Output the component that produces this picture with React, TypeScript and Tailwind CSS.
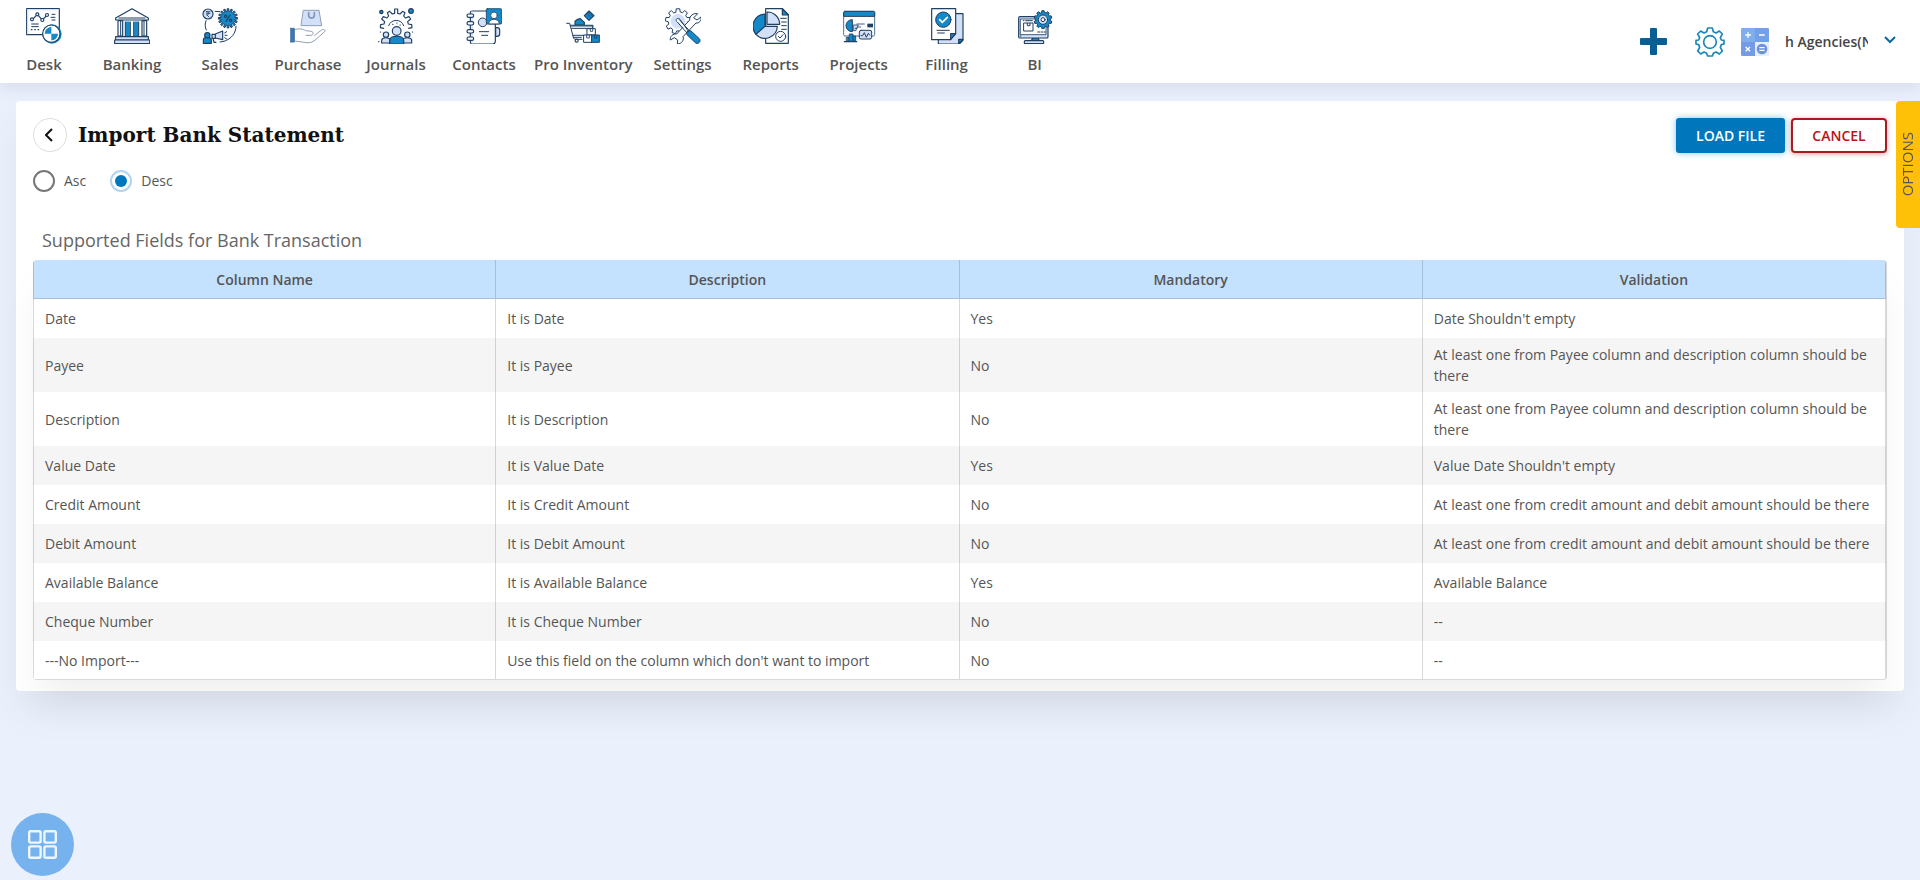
import React from "react";

const NAVY = "#1f3f63";
const BLUE = "#1489c9";
const PALE = "#d4e0f8";

function NavIcon({ children }: { children: React.ReactNode }) {
  return (
    <svg
      aria-hidden="true"
      viewBox="0 0 108 108"
      className="h-9 w-9 shrink-0"
      fill="none"
      stroke={NAVY}
      strokeWidth="3.5"
      strokeLinecap="round"
      strokeLinejoin="round"
    >
      {children}
    </svg>
  );
}

function gearPath(cx: number, cy: number, outer: number, inner: number, teeth: number) {
  const points: string[] = [];
  const step = (Math.PI * 2) / teeth;
  for (let i = 0; i < teeth; i++) {
    const a = i * step - Math.PI / 2;
    const corners: [number, number][] = [
      [-0.32, inner],
      [-0.2, outer],
      [0.2, outer],
      [0.32, inner],
    ];
    corners.forEach(([t, r]) => {
      points.push(`${(cx + Math.cos(a + t * step) * r).toFixed(1)} ${(cy + Math.sin(a + t * step) * r).toFixed(1)}`);
    });
  }
  return `M${points.join("L")}Z`;
}

const DeskIcon = () => (
  <NavIcon>
    <rect x="2" y="2" width="98" height="78" fill="#fff" />
    <path d="M5 77V5h92" stroke={PALE} />
    <path d="M22 32l9-10M37 22l10 12M53 32l8-8" />
    <g fill="#fff">
      <circle cx="18" cy="34" r="4.5" />
      <circle cx="34" cy="19" r="4.5" />
      <circle cx="49" cy="36" r="4.5" />
      <circle cx="63" cy="21" r="4.5" />
    </g>
    <path d="M78 19h9M75 28h12M78 36h9M17 48h20M17 56h20" strokeWidth="3" />
    <path d="M16 65h2M26 65h2M36 65h2" />
    <circle cx="78" cy="78" r="29" fill={BLUE} stroke="none" />
    <circle cx="76" cy="77" r="26" fill="#fff" />
    <path d="M76 77V57a20 20 0 0 0-20 20ZM76 77v20a20 20 0 0 0 20-20Z" fill={BLUE} stroke="none" />
  </NavIcon>
);

const BankingIcon = () => (
  <NavIcon>
    <path d="M54 2L5 30v6h98v-6Z" fill="#fff" />
    <path d="M15 30h78" />
    <path d="M12 38h14v46H12ZM84 38h14v46H84Z" fill="#fff" />
    <path d="M36 42h10v42H36ZM62 42h10v42H62Z" fill={BLUE} stroke={BLUE} />
    <path d="M34 42v42M74 42v42M20 38v46M90 38v46" strokeWidth="3" />
    <path d="M49 42v42M59 42v42" strokeWidth="3" />
    <rect x="5" y="86" width="98" height="10" fill={PALE} />
    <rect x="2" y="96" width="105" height="11" fill={PALE} />
  </NavIcon>
);

const SalesIcon = () => (
  <NavIcon>
    <circle cx="18" cy="18" r="15" fill={PALE} />
    <path d="M13 11h11M13 16h11M14 21c9 0 9-10 0-10M15 21l6 6" strokeWidth="2.5" />
    <path d="M39 10l14 1M12 38c-4 10-3 20 1 28M102 55c0 20-14 38-36 45l-12 2" strokeWidth="3" />
    <path d={gearPath(78, 31, 29, 21, 16)} fill={BLUE} strokeWidth="3" />
    <path d="M72 40l12-18" strokeWidth="3.5" />
    <circle cx="71" cy="25" r="3.5" />
    <circle cx="86" cy="37" r="3.5" />
    <circle cx="16" cy="82" r="8" fill={BLUE} />
    <path d="M4 106V96c0-5 4-7 9-7h6c5 0 9 2 9 7v10Z" fill={BLUE} />
    <path d="M30 79h10v12H30ZM40 78l22-9v26l-22-5ZM33 91l3 12h6" fill={PALE} />
    <path d="M68 75l6-4M69 82h6M68 89l6 4" strokeWidth="3" />
  </NavIcon>
);

const PurchaseIcon = () => (
  <NavIcon>
    <g stroke="#7b8da4" strokeWidth="2.5">
      <path d="M41 7h46l8 46H34Z" fill={PALE} />
      <path d="M56 14v8c0 11 17 11 17 0v-8" stroke="#7f96b9" strokeWidth="5" />
      <rect x="1" y="61" width="12" height="41" fill="#3f79b5" stroke="#356294" />
      <path
        d="M14 65c14-5 24-2 33 3l17 2c8 2 7 11-1 12H48M14 99l36 5c10 1 20-2 28-10l28-25c-2-7-9-5-14-1L74 82"
        fill="#fff"
      />
    </g>
  </NavIcon>
);

const JournalsIcon = () => (
  <NavIcon>
    <circle cx="10" cy="12" r="5" fill={BLUE} />
    <circle cx="99" cy="9" r="7" fill={BLUE} />
    <path
      d="M17 61l-10-2 1-9 10-2 2-7-9-8 5-7 11 4 5-6-4-10 7-4 8 8 7-2V3h9v13l7 2 8-8 7 4-4 10 5 6 11-4 5 7-9 8 2 7 10 2 1 9-10 2"
      fill="#fff"
      strokeWidth="3.5"
    />
    <path d="M32 53a24 24 0 0 1 45 0" fill="#fff" strokeWidth="3" />
    <path d="M7 72h1M103 72h1M44 49h1M56 45h1M66 51h1M2 101h1" />
    <circle cx="24" cy="80" r="8" fill={PALE} />
    <circle cx="88" cy="80" r="8" fill={PALE} />
    <path d="M11 105V96c2-9 23-9 26 0v9ZM74 105v-9c2-9 25-9 27 0v9Z" fill={PALE} />
    <circle cx="56" cy="69" r="13" fill={PALE} />
    <path d="M35 108V96c2-15 40-15 42 0v12Z" fill={BLUE} />
  </NavIcon>
);

const ContactsIcon = () => (
  <NavIcon>
    <path d="M18 108h62c5 0 8-3 8-8V9H18c-3 0-5 2-5 5v86c0 5 2 8 5 8Z" fill="#fff" />
    <path d="M18 12v92" stroke={PALE} strokeWidth="5" />
    <g fill="#fff">
      <rect x="3" y="18" width="20" height="10" rx="5" />
      <rect x="3" y="41" width="20" height="10" rx="5" />
      <rect x="3" y="65" width="20" height="10" rx="5" />
      <rect x="3" y="87" width="20" height="10" rx="5" />
    </g>
    <path d="M89 59h5c5 0 7 4 7 8v10c0 5-3 8-8 8h-4Z" fill={PALE} />
    <circle cx="50" cy="43" r="13" fill={PALE} strokeWidth="3" />
    <path d="M40 71h28M47 82h18" strokeWidth="3" />
    <rect x="61" y="2" width="46" height="46" rx="3" fill={BLUE} strokeWidth="2.5" />
    <circle cx="84" cy="22" r="10" fill="#fff" strokeWidth="2.5" />
    <path d="M68 47c0-18 32-18 32 0Z" fill="#fff" strokeWidth="2.5" />
  </NavIcon>
);

const InventoryIcon = () => (
  <NavIcon>
    <path d="M72 9l15 14-15 14-14-14Z" fill={BLUE} />
    <path d="M68 19l8 8M72 14l9 9" strokeWidth="2.5" />
    <path d="M30 51V40l8-6 8-2 12 11v8Z" fill={BLUE} />
    <path d="M5 46h9l11 42c1 5 4 6 8 6h18" strokeWidth="3" />
    <path d="M17 53h66v12" fill="none" strokeWidth="5" stroke="#315775" />
    <path d="M20 61h58M24 82h32M25 88h24" strokeWidth="3" />
    <circle cx="35" cy="98" r="4.5" fill="#fff" />
    <rect x="67" y="62" width="24" height="19" fill="#fff" strokeWidth="3" />
    <rect x="57" y="81" width="24" height="22" fill="#fff" strokeWidth="3" />
    <rect x="81" y="81" width="22" height="22" fill={BLUE} strokeWidth="3" />
    <path d="M76 63v7h7v-7M65 82v8h8v-8M88 82v8h8v-8" strokeWidth="2.5" />
  </NavIcon>
);

const SettingsIcon = () => (
  <NavIcon>
    <path d={gearPath(39, 40, 38, 29, 9)} fill="#fff" strokeWidth="3" />
    <circle cx="39" cy="40" r="22" fill={PALE} stroke="none" />
    <path
      d="M97 17c-12-3-24 7-23 19L35 78c-11-2-21 8-19 18l12-7 10 7-1 12c13 0 21-12 17-22l39-41c9 2 17-8 15-18l-12 9-9-6Z"
      fill="#fff"
      strokeWidth="3"
    />
    <path d="M34 39c-3-8 6-10 11-5l26 37" fill="#fff" strokeWidth="3" />
    <path d="M37 42L66 75M43 35l30 33" strokeWidth="3" />
    <path d="M67 71l10-3 26 24c7 9-5 19-12 12L66 80Z" fill={BLUE} strokeWidth="3" />
  </NavIcon>
);

const ReportsIcon = () => (
  <NavIcon>
    <path d="M38 2h50l18 18v86H38Z" fill="#fff" />
    <path d="M88 2v19h18Z" fill={BLUE} />
    <path d="M83 31h17M86 42h14M86 53h14M86 64h14" strokeWidth="3" />
    <path d="M36 55V18A37 37 0 0 0 9 79Z" fill={BLUE} />
    <path d="M36 55L9 79A37 37 0 0 0 73 55Z" fill={PALE} />
    <path d="M42 49V12a37 37 0 0 1 38 37Z" fill={PALE} />
    <circle cx="83" cy="85" r="15" fill="#fff" strokeWidth="3" />
    <path d="M76 85l5 5 9-10" strokeWidth="3" />
  </NavIcon>
);

const ProjectsIcon = () => (
  <NavIcon>
    <rect x="8" y="10" width="93" height="74" rx="4" fill="#fff" strokeWidth="3" stroke="#4d7590" />
    <path d="M8 24V14c0-3 2-4 4-4h85c3 0 4 2 4 4v10Z" fill={BLUE} strokeWidth="3" />
    <path d="M33 35a18 18 0 1 0 0 36Z" fill={BLUE} strokeWidth="3" />
    <path d="M38 51h14l-8 17h-6Z" fill={PALE} strokeWidth="2.5" />
    <path d="M48 48h22M50 57h9M42 61h6" strokeWidth="2.5" />
    <rect x="79" y="47" width="17" height="11" fill={NAVY} stroke="none" />
    <rect x="55" y="67" width="37" height="26" rx="5" fill={PALE} strokeWidth="3" />
    <path d="M60 83h5l5-9 6 14 6-12 4 5" strokeWidth="3" />
    <path d="M17 88h7v12h-7ZM26 78h10v22H26ZM38 84h6v16h-6Z" fill={BLUE} strokeWidth="2.5" />
    <path d="M10 101h37" strokeWidth="4" />
  </NavIcon>
);

const FillingIcon = () => (
  <NavIcon>
    <path d="M82 17h20v80l-11 11H28V94" fill={PALE} />
    <path d="M102 94H89v14Z" fill={BLUE} />
    <path d="M8 2h72v75L64 95H8Z" fill="#fff" />
    <path d="M80 77H65v18Z" fill={BLUE} />
    <circle cx="43" cy="35" r="23" fill={BLUE} strokeWidth="3" />
    <path d="M32 35l8 8 15-15" stroke="#fff" strokeWidth="5" />
    <path d="M24 67h37M26 75h20" strokeWidth="3" />
  </NavIcon>
);

const BiIcon = () => (
  <NavIcon>
    <path d="M48 89h16l3 12H41Z" fill={BLUE} />
    <rect x="22" y="98" width="58" height="9" rx="3" fill={PALE} />
    <rect x="5" y="26" width="88" height="64" rx="4" fill={PALE} />
    <rect x="11" y="33" width="76" height="47" fill="#fff" strokeWidth="2.5" />
    <rect x="21" y="45" width="27" height="24" fill="#fff" strokeWidth="3" />
    <path d="M31 46v7h8v-7M19 38h2M26 38h20M62 72h6M72 72h6M82 72h3M10 84h2" strokeWidth="3" />
    <path d={gearPath(78, 35, 27, 22, 10)} fill={BLUE} strokeWidth="3" />
    <circle cx="78" cy="35" r="14" fill={PALE} strokeWidth="3" />
    <circle cx="78" cy="35" r="6" fill="#fff" strokeWidth="3" />
  </NavIcon>
);

const NAV = [
  { label: "Desk", Icon: DeskIcon },
  { label: "Banking", Icon: BankingIcon },
  { label: "Sales", Icon: SalesIcon },
  { label: "Purchase", Icon: PurchaseIcon },
  { label: "Journals", Icon: JournalsIcon },
  { label: "Contacts", Icon: ContactsIcon },
  { label: "Pro Inventory", Icon: InventoryIcon },
  { label: "Settings", Icon: SettingsIcon },
  { label: "Reports", Icon: ReportsIcon },
  { label: "Projects", Icon: ProjectsIcon },
  { label: "Filling", Icon: FillingIcon },
  { label: "BI", Icon: BiIcon },
];

const COLUMNS = ["Column Name", "Description", "Mandatory", "Validation"];

const ROWS = [
  ["Date", "It is Date", "Yes", "Date Shouldn't empty"],
  ["Payee", "It is Payee", "No", "At least one from Payee column and description column should be there"],
  ["Description", "It is Description", "No", "At least one from Payee column and description column should be there"],
  ["Value Date", "It is Value Date", "Yes", "Value Date Shouldn't empty"],
  ["Credit Amount", "It is Credit Amount", "No", "At least one from credit amount and debit amount should be there"],
  ["Debit Amount", "It is Debit Amount", "No", "At least one from credit amount and debit amount should be there"],
  ["Available Balance", "It is Available Balance", "Yes", "Available Balance"],
  ["Cheque Number", "It is Cheque Number", "No", "--"],
  ["---No Import---", "Use this field on the column which don't want to import", "No", "--"],
];

function Header() {
  return (
    <header className="relative z-10 flex h-[83px] items-stretch justify-between bg-white shadow-[0_4px_16px_rgba(60,60,110,0.12)]">
      <nav aria-label="Main" className="flex">
        {NAV.map(({ label, Icon }) => (
          <a
            key={label}
            href="#"
            className="flex min-w-[88px] flex-col items-center px-[6px] pt-2 text-[15px] leading-5 font-semibold whitespace-nowrap text-[#555]"
          >
            <Icon />
            <span className="mt-[10px]">{label}</span>
          </a>
        ))}
      </nav>
      <div className="flex items-center pr-6">
        <button type="button" aria-label="Add" className="mr-7">
          <svg viewBox="0 0 27 27" className="h-[27px] w-[27px]" fill="#075f94" aria-hidden="true">
            <path d="M11 0h5a1 1 0 0 1 1 1v9h9a1 1 0 0 1 1 1v5a1 1 0 0 1-1 1h-9v9a1 1 0 0 1-1 1h-5a1 1 0 0 1-1-1v-9H1a1 1 0 0 1-1-1v-5a1 1 0 0 1 1-1h9V1a1 1 0 0 1 1-1Z" />
          </svg>
        </button>
        <button type="button" aria-label="Preferences" className="mr-4">
          <svg
            viewBox="0 0 90 90"
            className="h-[30px] w-[30px]"
            fill="none"
            stroke="#1b86b8"
            strokeWidth="5"
            strokeLinejoin="round"
            aria-hidden="true"
          >
            <path d="M38 3h14l3 11 8 4 10-6 9 9-6 11 3 7 8 1v11l-8 2-3 8 6 11-9 9-10-6-8 4-3 8H38l-3-8-8-4-10 6-9-9 6-11-3-8-8-2V40l8-1 3-7-6-11 9-9 10 6 8-4Z" />
            <circle cx="45" cy="45" r="19" />
          </svg>
        </button>
        <button type="button" aria-label="Calculator" className="mr-4">
          <svg viewBox="0 0 84 84" className="h-7 w-7" fill="none" stroke="#fff" strokeWidth="4" aria-hidden="true">
            <path d="M4 0h38v42H0V4a4 4 0 0 1 4-4Z" fill="#80adeb" stroke="none" />
            <path d="M42 0h38a4 4 0 0 1 4 4v38H42Z" fill="#759fe6" stroke="none" />
            <path d="M0 42h42v42H4a4 4 0 0 1-4-4Z" fill="#759be6" stroke="none" />
            <path d="M42 42h42v38a4 4 0 0 1-4 4H42Z" fill="#e6eefb" stroke="none" />
            <circle cx="63" cy="63" r="16" fill="#6b91e0" stroke="none" />
            <path d="M21 13v17M13 21h17M54 21h17M14 57l13 13M27 57l-13 13M55 59h16M55 67h16" />
          </svg>
        </button>
        <button type="button" className="flex items-center text-sm font-semibold text-[#444]">
          <span className="w-[83px] overflow-hidden text-left whitespace-nowrap">h Agencies(N</span>
          <svg
            viewBox="0 0 12 8"
            className="mb-[3px] ml-4 h-2 w-3"
            fill="none"
            stroke="#0b6a9e"
            strokeWidth="2"
            aria-hidden="true"
          >
            <path d="M1 1l5 5 5-5" />
          </svg>
        </button>
      </div>
    </header>
  );
}

function SortOption({ label, defaultChecked }: { label: string; defaultChecked?: boolean }) {
  return (
    <label className="flex items-center gap-[9px]">
      <input
        type="radio"
        name="sort"
        defaultChecked={defaultChecked}
        className="flex h-[22px] w-[22px] appearance-none items-center justify-center rounded-full border-2 border-[#777] bg-white before:h-3 before:w-3 before:rounded-full checked:border-[#b3d3ee] checked:before:bg-[#0077bc]"
      />
      {label}
    </label>
  );
}

export default function App() {
  return (
    <div className="min-h-screen bg-[#eaf0fc] font-['Open_Sans',sans-serif] text-sm text-[#555]">
      <Header />

      <main className="mx-4 mt-[18px] rounded-[4px] bg-white px-[17px] pt-[17px] pb-[11px] shadow-[0_20px_40px_rgba(0,0,0,0.05)]">
        <div className="flex items-start justify-between">
          <div className="flex items-center gap-[11px]">
            <button
              type="button"
              aria-label="Back"
              className="flex h-[34px] w-[34px] items-center justify-center rounded-full border border-[#ddd] bg-white"
            >
              <svg
                viewBox="0 0 8 14"
                className="mr-[3px] h-[14px] w-2"
                fill="none"
                stroke="#111"
                strokeWidth="2"
                aria-hidden="true"
              >
                <path d="M7 1L1 7l6 6" />
              </svg>
            </button>
            <h1 className="font-['DejaVu_Serif',serif] text-[20px] leading-7 font-bold text-[#111]">
              Import Bank Statement
            </h1>
          </div>
          <div className="flex items-center gap-[6px]">
            <button
              type="button"
              className="h-[35px] w-[109px] rounded-[3px] bg-[#0077bc] text-[14px] font-semibold text-white shadow-[0_0_6px_rgba(80,190,240,0.8)]"
            >
              LOAD FILE
            </button>
            <button
              type="button"
              className="h-[35px] w-24 rounded-[4px] border-2 border-[#a81c20] bg-white text-[14px] font-semibold text-[#b81418] shadow-[0_1px_5px_rgba(200,60,60,0.5)]"
            >
              CANCEL
            </button>
          </div>
        </div>

        <div role="radiogroup" aria-label="Sort order" className="mt-[17px] flex gap-6">
          <SortOption label="Asc" />
          <SortOption label="Desc" defaultChecked />
        </div>

        <h2 className="mt-9 ml-[9px] text-[18px] leading-6 text-[#666]">Supported Fields for Bank Transaction</h2>

        <div className="mt-2 overflow-hidden rounded-[4px] border-r border-[#d5d5d5] bg-white shadow-[0_24px_40px_-8px_rgba(0,0,0,0.07)]">
          <table className="w-full table-fixed border-separate border-spacing-0 text-left leading-[21px]">
            <thead>
              <tr className="h-[39px] bg-[#c4e1fe]">
                {COLUMNS.map((column) => (
                  <th
                    key={column}
                    scope="col"
                    className="border-r border-b border-black/15 px-3 text-center font-semibold first:border-l"
                  >
                    {column}
                  </th>
                ))}
              </tr>
            </thead>
            <tbody className="[&>tr:last-child>td]:border-b">
              {ROWS.map((row) => (
                <tr key={row[0]} className="h-[39px] even:bg-[#f5f5f5]">
                  {row.map((cell, i) => (
                    <td key={i} className="border-r border-black/15 px-[11px] py-[6px] first:border-l">
                      {cell}
                    </td>
                  ))}
                </tr>
              ))}
            </tbody>
          </table>
        </div>
      </main>

      <button
        type="button"
        className="fixed top-[101px] right-0 z-20 flex h-[127px] w-6 items-center justify-center rounded-l-[4px] bg-[#ffc107] text-[15px] text-[#555]"
      >
        <span className="rotate-180 [writing-mode:vertical-rl]">OPTIONS</span>
      </button>

      <button
        type="button"
        aria-label="Open apps"
        className="fixed bottom-1 left-[11px] z-20 flex h-[63px] w-[63px] items-center justify-center rounded-full bg-[#75b2ee]"
      >
        <svg viewBox="0 0 29 29" className="h-[29px] w-[29px]" fill="none" stroke="#eef6ff" strokeWidth="2.4" aria-hidden="true">
          <rect x="1.2" y="1.2" width="11.4" height="11.4" rx="1.5" />
          <rect x="16.4" y="1.2" width="11.4" height="11.4" rx="1.5" />
          <rect x="1.2" y="16.4" width="11.4" height="11.4" rx="1.5" />
          <rect x="16.4" y="16.4" width="11.4" height="11.4" rx="1.5" />
        </svg>
      </button>
    </div>
  );
}
